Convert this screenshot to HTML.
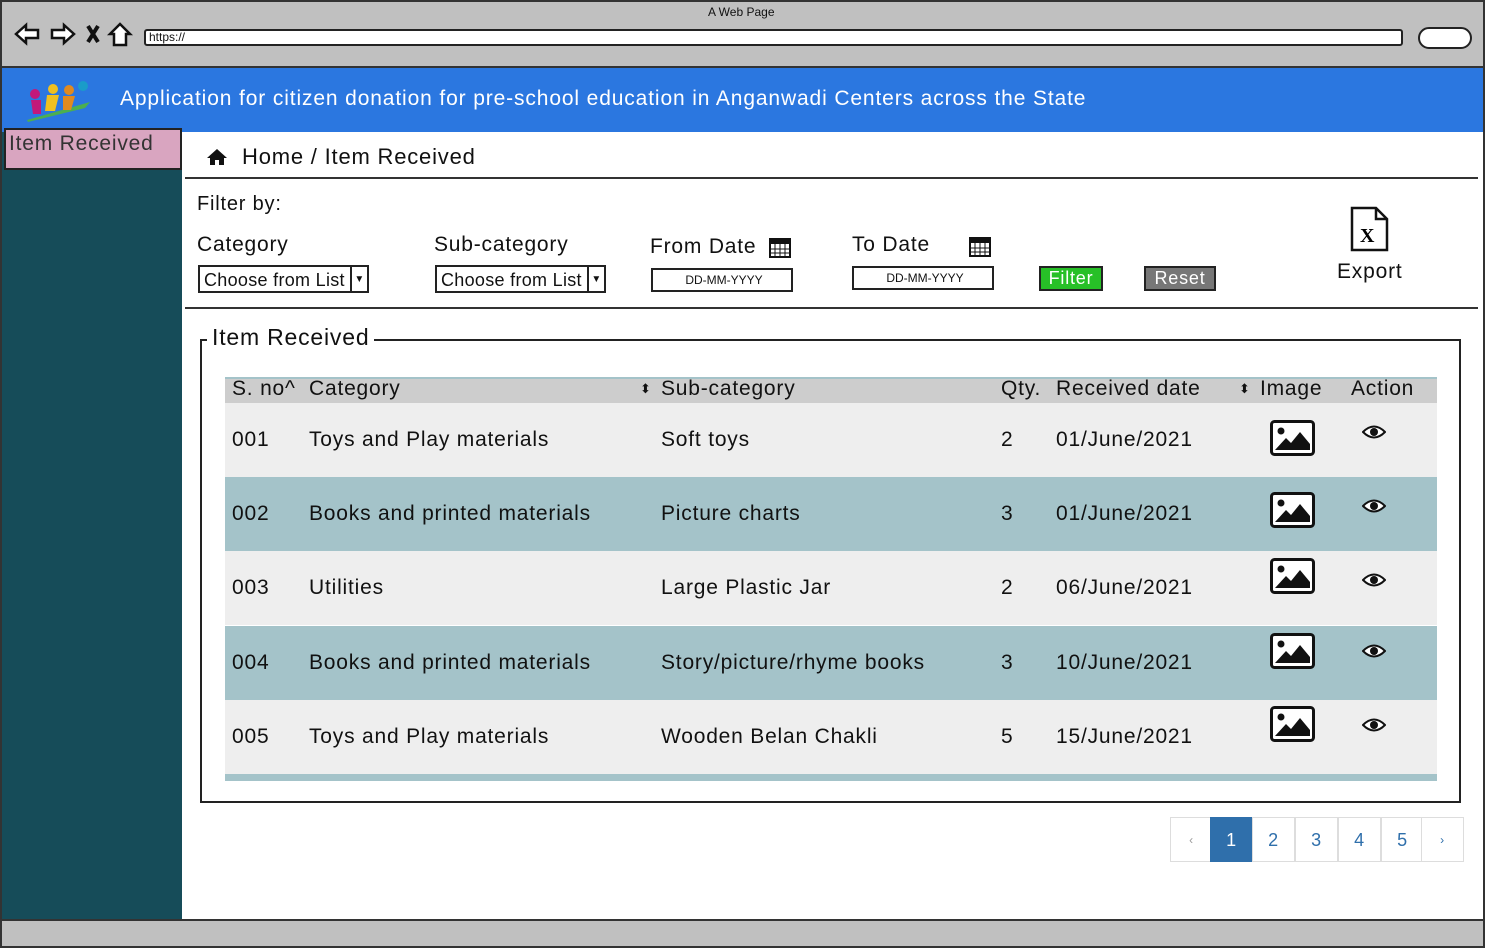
<!DOCTYPE html>
<html><head><meta charset="utf-8"><style>
body{margin:0;width:1485px;height:948px;position:relative;overflow:hidden;background:#fff;font-family:"Liberation Sans",sans-serif;color:#111;letter-spacing:0.8px}
.a{position:absolute}
.t{position:absolute;white-space:nowrap}
.row{position:absolute;left:225px;width:1212px;height:74px}
.row .t{top:25px;font-size:21px}
.sel{position:absolute;height:28px;border:2px solid #222;background:#fff;font-size:18px;line-height:26px;padding-left:4px;box-sizing:border-box;letter-spacing:0.3px}
.pg{position:absolute;top:817px;width:43px;height:45px;border:1px solid #ddd;box-sizing:border-box;text-align:center;line-height:44px;color:#2f6fab;font-size:18px;background:#fff}
</style></head><body>
<div class="a" style="left:0;top:0;width:1485px;height:68px;background:#c0c0c0;border:2px solid #333;box-sizing:border-box"></div>
<div class="t" style="left:708px;top:5px;font-size:12px;letter-spacing:0">A Web Page</div>
<svg class="a" style="left:14px;top:20px" width="120" height="28" viewBox="0 0 120 28" fill="#fff" stroke="#111" stroke-width="2.5"><path d="M2 14 L12 5 V10 H24 V18 H12 V23Z"/><path d="M60 14 L50 5 V10 H38 V18 H50 V23Z"/><path d="M74 6 L84 22 M84 6 L74 22" stroke-width="4"/><path d="M96 14 L106 4 L116 14 H112 V25 H100 V14Z"/></svg>
<div class="a" style="left:144px;top:29px;width:1259px;height:17px;background:#fff;border:2px solid #222;border-radius:3px;box-sizing:border-box"></div>
<div class="t" style="left:149px;top:30px;font-size:12px;letter-spacing:0">https://</div>
<div class="a" style="left:1418px;top:27px;width:54px;height:22px;background:#fff;border:2px solid #222;border-radius:12px;box-sizing:border-box"></div>
<div class="a" style="left:0;top:68px;width:1485px;height:64px;background:#2b77e0"></div>
<svg class="a" style="left:25px;top:80px" width="70" height="42"><path d="M2 40 L65 22 L60 28 L3 42Z" fill="#4caf50"/><circle cx="10" cy="14" r="5" fill="#c2187a"/><circle cx="28" cy="9" r="5" fill="#f0c020"/><circle cx="44" cy="10" r="5" fill="#e08a20"/><circle cx="58" cy="6" r="5" fill="#1a9cc9"/><path d="M6 20 h10 v14 h-8Z" fill="#c2187a"/><path d="M22 15 h12 l-4 16 h-10Z" fill="#f0c020"/><path d="M38 16 h12 l-4 14 h-8Z" fill="#e08a20"/></svg>
<div class="t" style="left:120px;top:87px;font-size:21px;color:#fff;letter-spacing:0.87px">Application for citizen donation for pre-school education in Anganwadi Centers across the State</div>
<div class="a" style="left:0;top:132px;width:182px;height:787px;background:#164c59"></div>
<div class="a" style="left:4px;top:128px;width:178px;height:42px;background:#d9a5c0;border:2px solid #222;box-sizing:border-box"></div>
<div class="t" style="left:9px;top:132px;font-size:21px;color:#333">Item Received</div>
<svg class="a" style="left:206px;top:148px" width="22" height="18"><path d="M11 1 L21 10 H18 V17 H13 V12 H9 V17 H4 V10 H1Z" fill="#111"/></svg>
<div class="t" style="left:242px;top:144px;font-size:22px">Home / Item Received</div>
<div class="a" style="left:185px;top:177px;width:1293px;height:2px;background:#333"></div>
<div class="t" style="left:197px;top:193px;font-size:20px">Filter by:</div>
<div class="t" style="left:197px;top:233px;font-size:21px">Category</div>
<div class="t" style="left:434px;top:233px;font-size:21px">Sub-category</div>
<div class="t" style="left:650px;top:235px;font-size:21px">From Date</div>
<div class="t" style="left:852px;top:233px;font-size:21px">To Date</div>
<div class="sel" style="left:198px;top:265px;width:171px">Choose from List<span style="position:absolute;right:0;top:0;width:15px;border-left:2px solid #222;height:24px;font-size:10px;text-align:center">▼</span></div>
<div class="sel" style="left:435px;top:265px;width:171px">Choose from List<span style="position:absolute;right:0;top:0;width:15px;border-left:2px solid #222;height:24px;font-size:10px;text-align:center">▼</span></div>
<svg class="a" style="left:769px;top:236px" width="22" height="22"><rect x="1" y="3" width="20" height="18" fill="#fff" stroke="#111" stroke-width="2"/><rect x="1" y="3" width="20" height="5" fill="#111"/><path d="M6 8v13M11 8v13M16 8v13M1 13h20M1 17h20" stroke="#111"/></svg>
<svg class="a" style="left:969px;top:235px" width="22" height="22"><rect x="1" y="3" width="20" height="18" fill="#fff" stroke="#111" stroke-width="2"/><rect x="1" y="3" width="20" height="5" fill="#111"/><path d="M6 8v13M11 8v13M16 8v13M1 13h20M1 17h20" stroke="#111"/></svg>
<div class="sel" style="left:651px;top:268px;width:142px;height:24px;line-height:20px;font-size:12px;text-align:center;letter-spacing:0">DD-MM-YYYY</div>
<div class="sel" style="left:852px;top:266px;width:142px;height:24px;line-height:20px;font-size:12px;text-align:center;letter-spacing:0">DD-MM-YYYY</div>
<div class="a" style="left:1039px;top:266px;width:64px;height:25px;background:#27c027;border:2px solid #222;box-sizing:border-box;color:#fff;font-size:18px;text-align:center;line-height:21px">Filter</div>
<div class="a" style="left:1144px;top:266px;width:72px;height:25px;background:#777;border:2px solid #222;box-sizing:border-box;color:#fff;font-size:18px;text-align:center;line-height:21px">Reset</div>
<svg class="a" style="left:1350px;top:206px" width="40" height="46"><path d="M2 2 H26 L37 13 V44 H2Z M26 2 V13 H37" fill="#fff" stroke="#111" stroke-width="2.5"/><text x="10" y="36" font-family="Liberation Serif" font-size="20" font-weight="bold">X</text></svg>
<div class="t" style="left:1337px;top:260px;font-size:21px">Export</div>
<div class="a" style="left:185px;top:307px;width:1293px;height:2px;background:#333"></div>
<div class="a" style="left:200px;top:339px;width:1261px;height:464px;border:2px solid #222;box-sizing:border-box"></div>
<div class="t" style="left:207px;top:324px;font-size:23px;background:#fff;padding:0 5px">Item Received</div>
<div class="a" style="left:225px;top:377px;width:1212px;height:26px;background:#cdcdcd;border-top:2px solid #a4c3c9"></div>
<div class="t" style="left:232px;top:377px;font-size:21px">S. no^</div>
<div class="t" style="left:309px;top:377px;font-size:21px">Category</div>
<div class="t" style="left:640px;top:381px;font-size:13px">⬍</div>
<div class="t" style="left:661px;top:377px;font-size:21px">Sub-category</div>
<div class="t" style="left:1001px;top:377px;font-size:21px">Qty.</div>
<div class="t" style="left:1056px;top:377px;font-size:21px">Received date</div>
<div class="t" style="left:1239px;top:381px;font-size:13px">⬍</div>
<div class="t" style="left:1260px;top:377px;font-size:21px">Image</div>
<div class="t" style="left:1351px;top:377px;font-size:21px">Action</div>

<div class="row" style="top:403px;background:#eeeeee"><div class="t" style="left:7px">001</div><div class="t" style="left:84px">Toys and Play materials</div><div class="t" style="left:436px">Soft toys</div><div class="t" style="left:776px">2</div><div class="t" style="left:831px">01/June/2021</div></div>
<div class="row" style="top:477px;background:#a4c3c9"><div class="t" style="left:7px">002</div><div class="t" style="left:84px">Books and printed materials</div><div class="t" style="left:436px">Picture charts</div><div class="t" style="left:776px">3</div><div class="t" style="left:831px">01/June/2021</div></div>
<div class="row" style="top:551px;background:#eeeeee"><div class="t" style="left:7px">003</div><div class="t" style="left:84px">Utilities</div><div class="t" style="left:436px">Large Plastic Jar</div><div class="t" style="left:776px">2</div><div class="t" style="left:831px">06/June/2021</div></div>
<div class="row" style="top:626px;background:#a4c3c9"><div class="t" style="left:7px">004</div><div class="t" style="left:84px">Books and printed materials</div><div class="t" style="left:436px">Story/picture/rhyme books</div><div class="t" style="left:776px">3</div><div class="t" style="left:831px">10/June/2021</div></div>
<div class="row" style="top:700px;background:#eeeeee"><div class="t" style="left:7px">005</div><div class="t" style="left:84px">Toys and Play materials</div><div class="t" style="left:436px">Wooden Belan Chakli</div><div class="t" style="left:776px">5</div><div class="t" style="left:831px">15/June/2021</div></div>
<div class="a" style="left:225px;top:774px;width:1212px;height:7px;background:#a4c3c9"></div>

<svg width="0" height="0" style="position:absolute"><defs><g id="im"><rect x="1.5" y="1.5" width="42" height="33" rx="3" fill="#fff" stroke="#111" stroke-width="3"/><circle cx="11" cy="11" r="3.5" fill="#111"/><path d="M5 30 L16 18 L21 23 L30 12 L40 24 V30Z" fill="#111"/></g><g id="ey"><path d="M1 8 Q12 -3 23 8 Q12 19 1 8Z" fill="#fff" stroke="#111" stroke-width="2"/><circle cx="12" cy="8" r="4" fill="#111"/></g></defs></svg>
<svg class="a" style="left:1270px;top:420px" width="46" height="37"><use href="#im"/></svg>
<svg class="a" style="left:1270px;top:492px" width="46" height="37"><use href="#im"/></svg>
<svg class="a" style="left:1270px;top:558px" width="46" height="37"><use href="#im"/></svg>
<svg class="a" style="left:1270px;top:633px" width="46" height="37"><use href="#im"/></svg>
<svg class="a" style="left:1270px;top:706px" width="46" height="37"><use href="#im"/></svg>
<svg class="a" style="left:1362px;top:424px" width="24" height="17"><use href="#ey"/></svg>
<svg class="a" style="left:1362px;top:498px" width="24" height="17"><use href="#ey"/></svg>
<svg class="a" style="left:1362px;top:572px" width="24" height="17"><use href="#ey"/></svg>
<svg class="a" style="left:1362px;top:643px" width="24" height="17"><use href="#ey"/></svg>
<svg class="a" style="left:1362px;top:717px" width="24" height="17"><use href="#ey"/></svg>

<div class="pg" style="left:1170px;color:#999;font-size:12px">‹</div>
<div class="pg" style="left:1210px;background:#2f6fab;color:#fff;border-color:#2f6fab">1</div>
<div class="pg" style="left:1252px">2</div>
<div class="pg" style="left:1295px">3</div>
<div class="pg" style="left:1338px">4</div>
<div class="pg" style="left:1381px">5</div>
<div class="pg" style="left:1421px;font-size:12px">›</div>
<div class="a" style="left:0;top:919px;width:1485px;height:29px;background:#c0c0c0;border:2px solid #333;box-sizing:border-box"></div>
<div class="a" style="left:1483px;top:68px;width:2px;height:852px;background:#333"></div>
<div class="a" style="left:0;top:68px;width:2px;height:852px;background:#333"></div>
</body></html>
